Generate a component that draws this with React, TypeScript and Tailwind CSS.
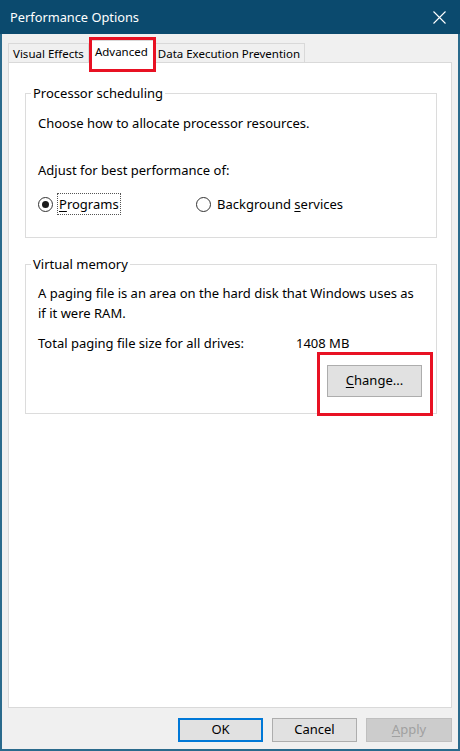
import React from 'react';

function Radio({ checked, label, focused }: { checked?: boolean; label: React.ReactNode; focused?: boolean }) {
  return (
    <label className="flex items-center gap-[4px]">
      <span className="flex h-[15px] w-[15px] items-center justify-center rounded-full border border-[#333333] bg-white">
        {checked && <span className="h-[7px] w-[7px] rounded-full bg-[#1a1a1a]" />}
      </span>
      <span
        className={
          focused
            ? 'border border-dotted border-[#555555] px-px leading-[20px]'
            : 'border border-transparent px-px leading-[20px]'
        }
      >
        {label}
      </span>
    </label>
  );
}

function GroupBox({ title, children, className }: { title: string; children: React.ReactNode; className?: string }) {
  return (
    <fieldset className={`border border-[#dcdcdc] p-0 ${className ?? ''}`}>
      <legend className="ml-[5px] px-[2px] leading-[20px]">{title}</legend>
      {children}
    </fieldset>
  );
}

export default function App() {
  return (
    <div className="flex h-[751px] w-[460px] flex-col border-2 border-t-0 border-[#2a6a8c] bg-[#f0f0f0] font-['Segoe_UI','Noto_Sans',sans-serif] text-[13px] text-black">
      <div className="-mx-[2px] flex h-[34px] shrink-0 items-center justify-between bg-[#0b4a6e] pl-[10px] pr-[14px] pt-px text-white">
        <span className="text-[12.8px]">Performance Options</span>
        <svg width="13" height="13" viewBox="0 0 13 13" fill="none" stroke="white" strokeWidth="1.1">
          <path d="M0.5 0.5L12.5 12.5M12.5 0.5L0.5 12.5" />
        </svg>
      </div>

      <div className="flex flex-1 flex-col px-[6px] pb-[7px]">
        <div className="mt-[6px] flex h-[22px] items-end text-[11.5px]">
          <div className="flex h-[19px] items-center border border-b-0 border-[#d9d9d9] bg-[#f0f0f0] px-[4px] pt-px">
            Visual Effects
          </div>
          <div className="relative z-10 -mb-px flex h-[23px] items-center border border-b-0 border-[#d9d9d9] bg-white px-[5px]">
            Advanced
            <div className="absolute -left-[1px] -top-[4px] h-[35px] w-[67px] border-[3px] border-[#e81123]" />
          </div>
          <div className="flex h-[19px] items-center border border-b-0 border-l-0 border-[#d9d9d9] bg-[#f0f0f0] px-[4px] pt-px">
            Data Execution Prevention
          </div>
        </div>

        <div className="flex-1 border border-[#d9d9d9] bg-white px-[16px] pr-[14px] pt-[20px]">
          <GroupBox title="Processor scheduling">
            <div className="pb-[22px] pl-[12px] pt-[10px]">
              <div className="leading-[20px]">Choose how to allocate processor resources.</div>
              <div className="mt-[27px] leading-[20px]">Adjust for best performance of:</div>
              <div className="mt-[13px] flex items-center">
                <div className="w-[158px]">
                  <Radio
                    checked
                    focused
                    label={
                      <>
                        <span className="underline underline-offset-2">P</span>rograms
                      </>
                    }
                  />
                </div>
                <Radio
                  label={
                    <>
                      Background <span className="underline underline-offset-2">s</span>ervices
                    </>
                  }
                />
              </div>
            </div>
          </GroupBox>

          <GroupBox title="Virtual memory" className="mt-[16px]">
            <div className="pb-[16px] pl-[12px] pr-[14px] pt-[9px]">
              <div className="whitespace-nowrap leading-[20px]">
                A paging file is an area on the hard disk that Windows uses as
                <br />
                if it were RAM.
              </div>
              <div className="mt-[10px] flex leading-[20px]">
                <span className="w-[258px]">Total paging file size for all drives:</span>
                <span>1408 MB</span>
              </div>
              <div className="mt-[12px] flex justify-end">
                <div className="relative">
                  <button className="h-[32px] w-[95px] border border-[#adadad] bg-[#e1e1e1] text-[13px]">
                    <span className="underline underline-offset-2">C</span>hange...
                  </button>
                  <div className="absolute -left-[10px] -top-[13px] h-[64px] w-[116px] border-[3px] border-[#e81123]" />
                </div>
              </div>
            </div>
          </GroupBox>
        </div>

        <div className="mt-[10px] flex justify-end gap-[9px] pr-0">
          <button className="h-[24px] w-[85px] border-2 border-[#0078d7] bg-[#e1e1e1]">OK</button>
          <button className="h-[24px] w-[85px] border border-[#adadad] bg-[#e1e1e1]">Cancel</button>
          <button className="h-[24px] w-[86px] border border-[#bfbfbf] bg-[#cccccc] text-[#a0a0a0]">
            <span className="underline underline-offset-2">A</span>pply
          </button>
        </div>
      </div>
    </div>
  );
}
